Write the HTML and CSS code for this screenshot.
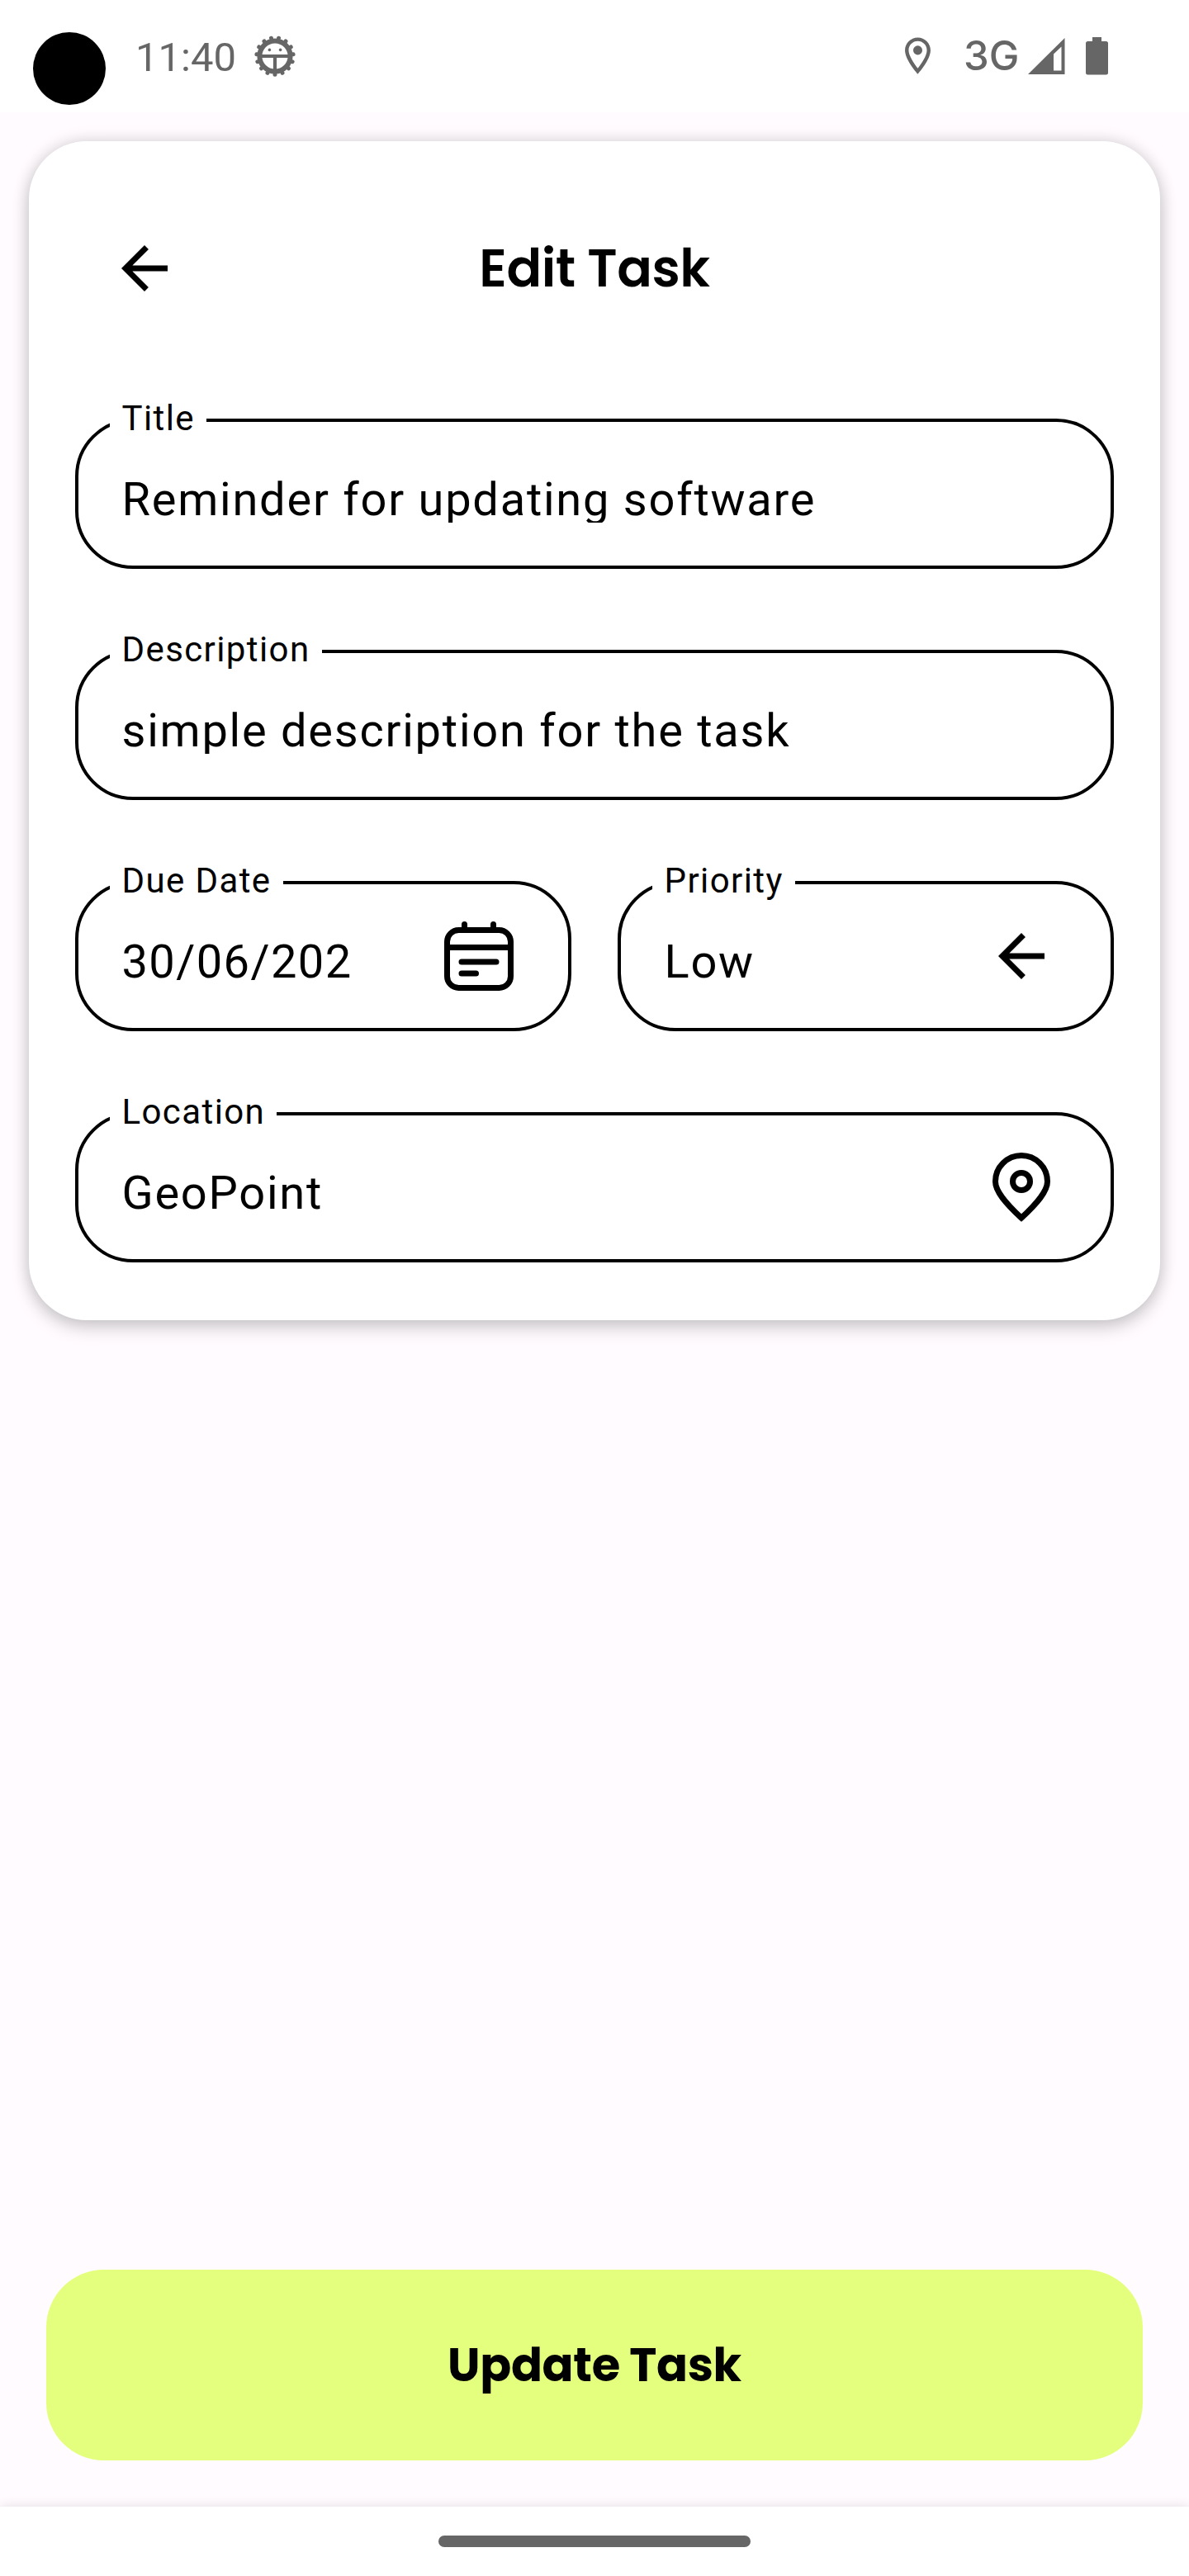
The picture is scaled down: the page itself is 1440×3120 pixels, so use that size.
FILE: index.html
```html
<!DOCTYPE html>
<html lang="en">
<head>
<meta charset="utf-8">
<title>Edit Task</title>
<link rel="stylesheet" href="styles.css">
</head>
<body>
<div class="screen">
  <header class="status">
    <span class="camera"></span>
    <span class="clock">11:40</span>
    <svg class="bug" viewBox="-25 -25 50 50">
      <circle r="18.6" fill="none" stroke="#666" stroke-width="6"/>
      <circle r="22.2" fill="none" stroke="#666" stroke-width="5" stroke-linecap="round" pathLength="150" stroke-dasharray="0.01 9.99" transform="rotate(90)"/>
      <path d="M-17 0H17M0 0V17" stroke="#666" stroke-width="4.2"/>
      <circle cx="-6.6" cy="-7.6" r="1.8" fill="#666"/>
      <circle cx="6.6" cy="-7.6" r="1.8" fill="#666"/>
    </svg>
    <svg class="gps" viewBox="0 0 24 24" fill="#666"><path d="M12 2C8.13 2 5 5.13 5 9c0 5.25 7 13 7 13s7-7.75 7-13c0-3.87-3.13-7-7-7zM7 9c0-2.76 2.24-5 5-5s5 2.24 5 5c0 2.88-2.88 7.19-5 9.88C9.92 16.21 7 11.85 7 9z"/><circle cx="12" cy="9" r="2.5"/></svg>
    <span class="network">3G</span>
    <svg class="signal" viewBox="0 0 45 44"><path fill="#666" fill-rule="evenodd" d="M0 44L44.500 0V44ZM31 19.500V39.500H40.500V10.500Z"/></svg>
    <svg class="battery" viewBox="0 0 27 46"><path fill="#666" d="M8 0H19V5H24.500Q27 5 27 7.500V43Q27 45.500 24.500 45.500H2.500Q0 45.500 0 43V7.500Q0 5 2.500 5H8Z"/></svg>
  </header>

  <main class="content">
    <section class="card">
      <div class="heading">
        <svg class="icon" viewBox="0 0 24 24"><path d="M20 11H7.830l5.590-5.590L12 4l-8 8 8 8 1.410-1.410L7.830 13H20v-2z"/></svg>
        <h1 class="title">Edit Task</h1>
      </div>
      <div class="fields">
        <div class="field">
          <label class="label">Title</label>
          <span class="value clipped">Reminder for updating software</span>
        </div>
        <div class="field">
          <label class="label">Description</label>
          <span class="value clipped">simple description for the task</span>
        </div>
        <div class="pair">
          <div class="field">
            <label class="label">Due Date</label>
            <span class="value date">30/06/202</span>
            <svg class="icon line" viewBox="0 0 24 24"><rect x="1" y="3" width="22" height="20" rx="4"/><path d="M1 9H23"/><path stroke-linecap="round" d="M7 1V3M17 1V3M6 14H18M6 18H11"/></svg>
          </div>
          <div class="field">
            <label class="label">Priority</label>
            <span class="value">Low</span>
            <svg class="icon" viewBox="0 0 24 24"><path d="M20 11H7.830l5.590-5.590L12 4l-8 8 8 8 1.410-1.410L7.830 13H20v-2z"/></svg>
          </div>
        </div>
        <div class="field">
          <label class="label">Location</label>
          <span class="value">GeoPoint</span>
          <svg class="icon line" viewBox="0 0 24 24"><path d="M12 22.600C6.500 17.500 3 13.400 3 10A9 9 0 0 1 21 10C21 13.400 17.500 17.500 12 22.600Z"/><circle cx="12" cy="10" r="3"/></svg>
        </div>
      </div>
    </section>
    <button class="submit">Update Task</button>
  </main>

  <footer class="nav"><span class="handle"></span></footer>
</div>
</body>
</html>
```

FILE: styles.css
```css
* { box-sizing: border-box; }
body { margin: 0; }
svg { display: block; flex: none; }

.screen {
  width: 1440px;
  height: 3120px;
  display: flex;
  flex-direction: column;
  background: #fffbff;
  color: #000;
  font-family: Roboto, sans-serif;
  overflow: hidden;
}

.status {
  height: 136px;
  flex: none;
  display: flex;
  align-items: flex-start;
  padding-left: 40px;
  background: #fff;
  color: #666;
}
.camera {
  width: 88px;
  height: 88px;
  margin-top: 39px;
  border-radius: 50%;
  background: #000;
}
.clock {
  width: 144px;
  margin: 40px 0 0 36px;
  font-size: 49px;
  line-height: 60px;
}
.bug { width: 50px; height: 50px; margin: 43px 0 0; }
.gps { width: 53px; height: 53px; margin: 41px 0 0 727px; }
.network {
  width: 78px;
  margin: 38px 0 0 29px;
  font: 500 49px/60px Inter, sans-serif;
}
.signal { width: 45px; height: 44px; margin-top: 46px; }
.battery { width: 27px; height: 46px; margin: 45px 0 0 25px; }

.content {
  flex: 1;
  display: flex;
  flex-direction: column;
  justify-content: space-between;
  padding: 35px 35px 56px;
}
.card {
  height: 1428px;
  padding: 0 56px;
  border-radius: 70px;
  background: #fff;
  box-shadow: 0 10px 22px rgba(0, 0, 0, .15), 0 0 20px rgba(0, 0, 0, .15);
}
.heading {
  display: grid;
  grid-template-columns: 84px 1fr 84px;
  align-items: center;
  height: 308px;
  padding: 0 42px;
}
.title {
  margin: 0;
  font: 600 63px/84px Poppins, Inter, sans-serif;
  letter-spacing: -.45px;
  text-align: center;
}
.icon { width: 84px; height: 84px; }
.line { fill: none; stroke: #000; stroke-width: 2; }

.fields {
  display: flex;
  flex-direction: column;
  gap: 98px;
  padding-top: 28px;
}
.pair { display: grid; grid-template-columns: 1fr 1fr; gap: 56px; }
.field {
  position: relative;
  display: flex;
  justify-content: space-between;
  align-items: center;
  height: 182px;
  padding: 0 66px 0 52.500px;
  border: 4px solid #000;
  border-radius: 70px;
}
.label {
  position: absolute;
  left: 38px;
  top: -32px;
  padding: 0 14px 0 14.500px;
  background: #fff;
  font-size: 42px;
  line-height: 56px;
  letter-spacing: 1.400px;
  white-space: nowrap;
}
.value {
  align-self: flex-start;
  height: 112px;
  margin-top: 38px;
  font-size: 56px;
  line-height: 112px;
  letter-spacing: 1.750px;
  white-space: nowrap;
}
.date { letter-spacing: 1.400px; }
/* single-line inputs crop the descenders */
.clipped { height: 84px; overflow: hidden; }

.submit {
  height: 231px;
  margin: 0 21px;
  padding: 0;
  border: 0;
  border-radius: 70px;
  background: #e4ff7e;
  color: #000;
  font: 700 56px/84px Poppins, Inter, sans-serif;
  letter-spacing: -.35px;
}

.nav {
  height: 84px;
  flex: none;
  display: flex;
  align-items: center;
  justify-content: center;
  background: #fff;
  box-shadow: 0 0 14px rgba(0, 0, 0, .12);
}
.handle { width: 378px; height: 14px; border-radius: 7px; background: #666; }
```
